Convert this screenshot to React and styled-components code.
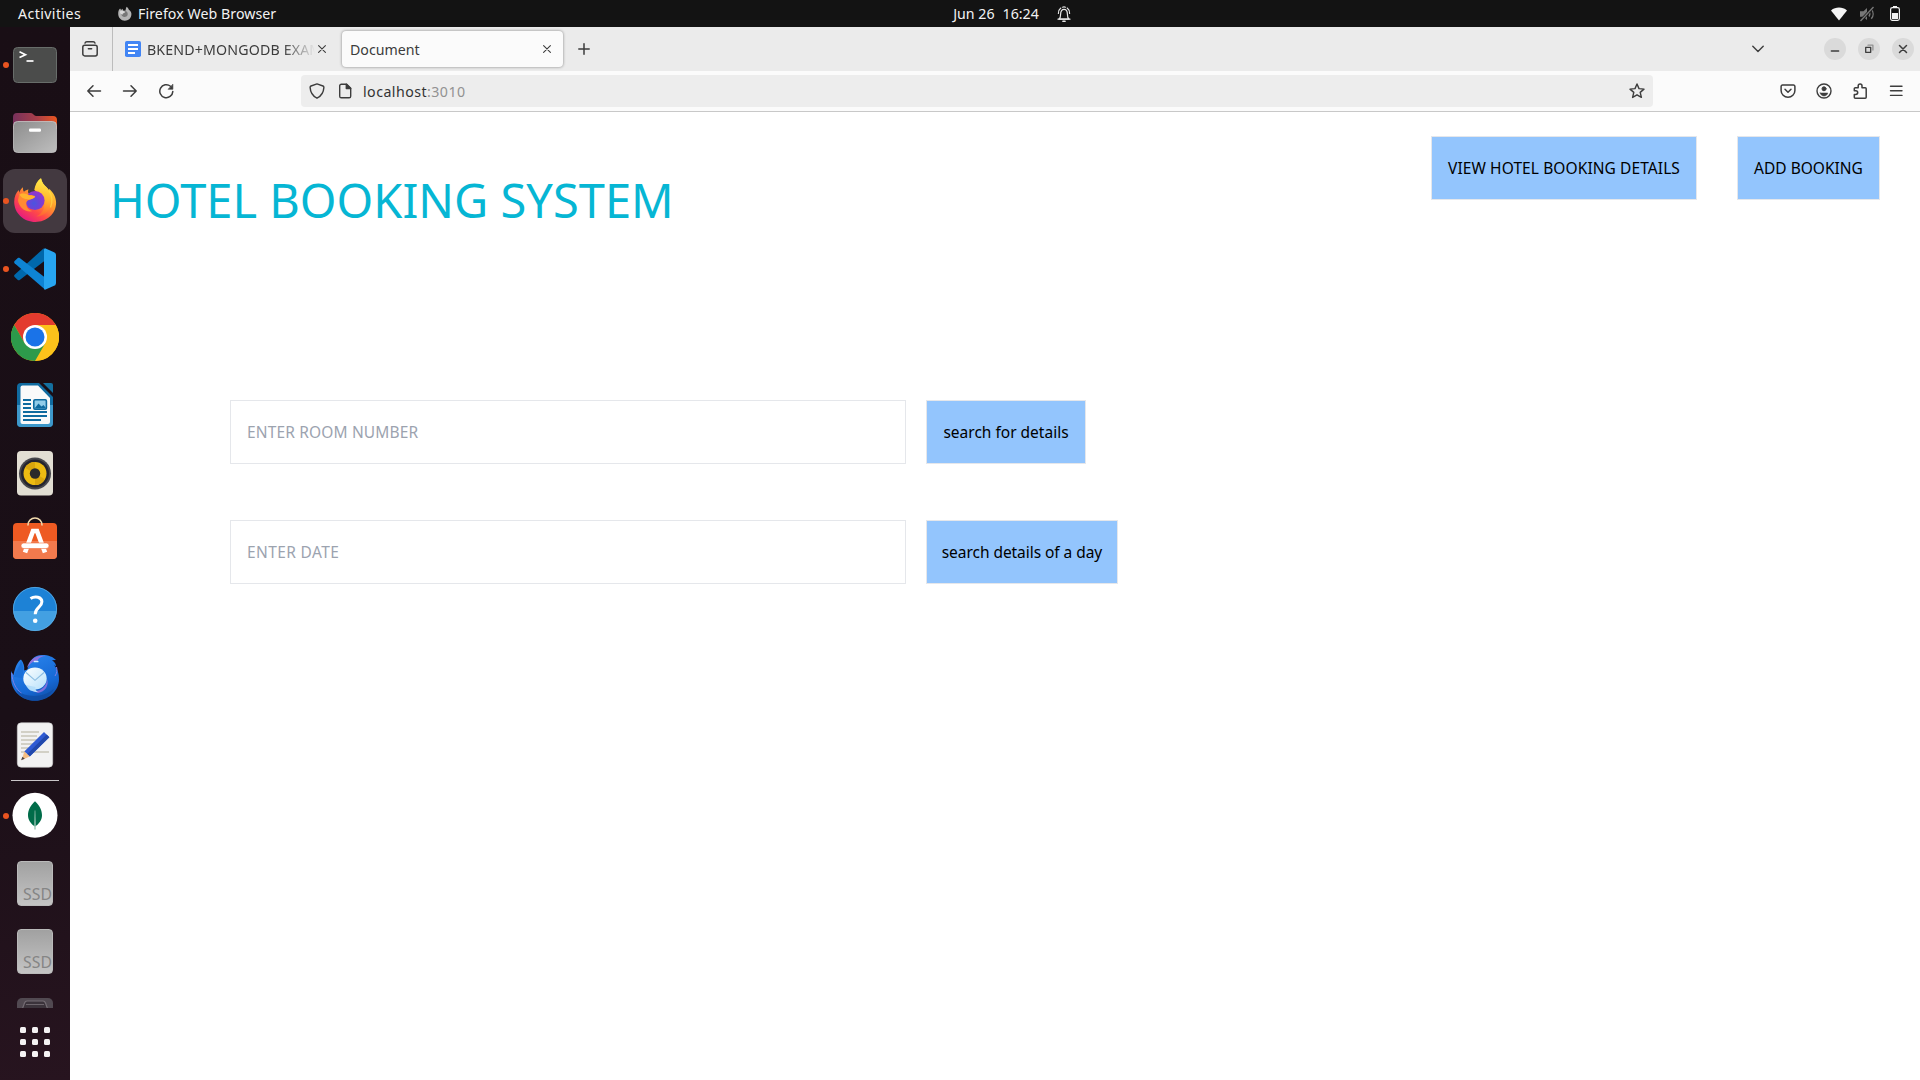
import React from 'react';
import styled, { createGlobalStyle } from 'styled-components';

const GlobalStyle = createGlobalStyle`
  *, *::before, *::after { box-sizing: border-box; }
  html, body { margin: 0; padding: 0; background: #fff; }
  body { font-family: 'Noto Sans', 'Open Sans', sans-serif; overflow: hidden; }
  svg { display: block; flex: none; }
`;

/* ---------- desktop shell ---------- */

const Desktop = styled.div`
  display: grid;
  grid-template: 27px 1053px / 70px 1fr;
  width: 1920px;
  height: 1080px;
`;

const TopBar = styled.header`
  grid-column: 1 / -1;
  display: grid;
  grid-template-columns: 1fr auto 1fr;
  align-items: center;
  background: #131313;
  color: #f2f2f2;
  font-size: 14.2px;
  line-height: 26px;
  white-space: pre;
`;

const BarGroup = styled.div`
  display: flex;
  align-items: center;
  justify-content: ${(p) => (p.$end ? 'flex-end' : 'flex-start')};
  padding: ${(p) => p.$pad || 0};
  gap: ${(p) => p.$gap || 0}px;
`;

const Label = styled.span`
  letter-spacing: ${(p) => p.$track || 0}px;
`;

const Dock = styled.nav`
  display: flex;
  flex-direction: column;
  align-items: center;
  padding-top: 4px;
  background: linear-gradient(172deg, #190e15 0%, #1a0f17 65%, #27141f 100%);
`;

const DockItem = styled.div`
  position: relative;
  display: flex;
  align-items: center;
  justify-content: center;
  flex: none;
  width: 70px;
  height: 68px;
`;

const Tile = styled.div`
  display: flex;
  align-items: center;
  justify-content: center;
  width: 64px;
  height: 64px;
  border-radius: 12px;
  background: ${(p) => (p.$active ? '#433940' : 'transparent')};
`;

const RunningDot = styled.i`
  position: absolute;
  left: 3px;
  top: 31px;
  width: 6px;
  height: 6px;
  border-radius: 50%;
  background: #e95420;
`;

const DockRule = styled.div`
  flex: none;
  width: 48px;
  height: 1px;
  margin: 1px 0;
  background: #c9c5c8;
`;

const DockClip = styled.div`
  height: 22px;
  overflow: hidden;
  flex: none;
`;

const AppsButton = styled.div`
  display: grid;
  grid-template-columns: repeat(3, 6px);
  gap: 6px;
  margin-top: 19px;
`;

const AppsDot = styled.i`
  width: 6px;
  height: 6px;
  border-radius: 1.5px;
  background: #f4f2f3;
`;

/* ---------- browser window ---------- */

const Browser = styled.section`
  display: flex;
  flex-direction: column;
  min-width: 0;
  background: #fff;
  color: #3c3c3c;
`;

const TabStrip = styled.div`
  display: flex;
  align-items: center;
  height: 44px;
  background: #ebebeb;
`;

const SidebarButton = styled.div`
  display: flex;
  align-items: center;
  height: 44px;
  width: 43px;
  padding-left: 12px;
  border-right: 1px solid #bcbcbc;
`;

const Tab = styled.div`
  display: flex;
  align-items: center;
  height: 36px;
  margin-left: ${(p) => (p.$active ? 16 : 12)}px;
  width: ${(p) => (p.$active ? 221 : 201)}px;
  padding: ${(p) => (p.$active ? '0 12px 0 8px' : '0')};
  border-radius: 4px;
  background: ${(p) => (p.$active ? '#fbfbfb' : 'transparent')};
  box-shadow: ${(p) => (p.$active ? '0 0 3px rgba(0,0,0,0.45)' : 'none')};
  font-size: 14.2px;
  line-height: 20px;
`;

const TabTitle = styled.span`
  flex: 1;
  min-width: 0;
  overflow: hidden;
  white-space: nowrap;
  margin-left: ${(p) => (p.$fade ? 6 : 0)}px;
  margin-right: ${(p) => (p.$fade ? 3 : 0)}px;
  padding-top: 1px;
  letter-spacing: ${(p) => p.$track || 0}px;
  mask-image: ${(p) => (p.$fade ? 'linear-gradient(to left, transparent, #000 32px)' : 'none')};
`;

const NewTab = styled.div`
  margin-left: 15px;
  flex: 1;
`;

const WindowControls = styled.div`
  display: flex;
  align-items: center;
  gap: 12px;
  padding-right: 6px;
`;

const RoundButton = styled.div`
  display: flex;
  align-items: center;
  justify-content: center;
  width: 22px;
  height: 22px;
  border-radius: 50%;
  background: #dadada;
`;

const ListTabs = styled.div`
  margin-right: 60px;
`;

const NavBar = styled.div`
  display: flex;
  align-items: center;
  height: 41px;
  padding: 0 16px;
  background: #fbfbfb;
  border-bottom: 1px solid #c8c8c8;
`;

const NavButtons = styled.div`
  display: flex;
  gap: 20px;
  width: 215px;
`;

const UrlBar = styled.div`
  display: flex;
  align-items: center;
  flex: none;
  width: 1352px;
  height: 32px;
  padding: 0 8px;
  gap: 12px;
  border-radius: 4px;
  background: #ededed;
`;

const Address = styled.span`
  flex: 1;
  margin-left: -2px;
  padding-top: 1px;
  font-size: 14.2px;
  line-height: 20px;
  letter-spacing: 0.45px;
  color: #333;
`;

const Port = styled.span`
  color: #929292;
`;

const Tools = styled.div`
  display: flex;
  justify-content: flex-end;
  gap: 20px;
  flex: 1;
`;

/* ---------- page ---------- */

const Page = styled.main`
  flex: 1;
  padding: 24px 40px 0;
`;

const Masthead = styled.div`
  display: flex;
  justify-content: space-between;
  align-items: flex-start;
  height: 264px;
`;

const Title = styled.h1`
  margin: 40px 0 0;
  font-size: 47px;
  line-height: 48px;
  font-weight: 400;
  letter-spacing: 0.01px;
  color: #06b6d4;
`;

const Actions = styled.div`
  display: flex;
  gap: 40px;
`;

const Button = styled.button`
  display: flex;
  align-items: center;
  justify-content: center;
  width: ${(p) => p.$w}px;
  height: 64px;
  padding: 0 0 1px;
  border: 1px solid #e5e7eb;
  background: #93c5fd;
  color: #000;
  font: 400 15.5px/24px 'Noto Sans', sans-serif;
  letter-spacing: ${(p) => p.$track || 0}px;
  white-space: nowrap;
`;

const SearchForm = styled.div`
  display: flex;
  flex-direction: column;
  gap: 56px;
  padding: 0 0 0 120px;
`;

const SearchRow = styled.div`
  display: flex;
  gap: 20px;
`;

const Field = styled.input`
  width: 676px;
  height: 64px;
  padding: 0 16px 1px;
  border: 1px solid #e5e7eb;
  background: #fff;
  font: 400 15.5px/24px 'Noto Sans', sans-serif;
  letter-spacing: ${(p) => p.$track}px;
  outline: none;
  &::placeholder { color: #9ca3af; opacity: 1; }
`;

/* ---------- toolbar icons ---------- */

const Line = ({ size = 16, w = 1.4, color = '#3d3d3d', children }) => (
  <svg width={size} height={size} viewBox={`0 0 ${size} ${size}`} fill="none" stroke={color}
    strokeWidth={w} strokeLinecap="round" strokeLinejoin="round">{children}</svg>
);

const CloseGlyph = () => <Line size={8} w={1.1}><path d="M.6.6l6.8 6.8M7.4.6L.6 7.4" /></Line>;

const GreyFirefox = () => (
  <svg width="15" height="15" viewBox="0 0 48 48">
    <path d="M4 20C5 13 8 9 10 8l3 5 5-4 1 5 8 1c1-6 2-10 4-13 4 3 6 6 7 10 6 4 9 9 8 16-1 12-10 19-21 19S2 38 4 20z" fill="#b4b4b4" />
    <path d="M16 20c4-5 14-5 17 1 4 8-2 14-8 14-7 0-12-5-12-11z" fill="#777" />
    <path d="M9 17l9-2 9 3-4 4c-4 1-6 3-5 6-6-1-9-6-9-11z" fill="#d8d8d8" />
  </svg>
);

const Bell = () => (
  <Line size={16} w={1.2} color="#e6e6e6">
    <path d="M3 13.2c1.4-1.2 1.6-3 1.6-5C4.600 5 6 3.300 8 3.300s3.400 1.700 3.400 4.900c0 2 .2 3.800 1.600 5z" />
    <path d="M2 13.2h12M2.400 7.500c0-2.500.8-4.200 2.400-5.400M13.600 7.500c0-2.500-.8-4.200-2.400-5.400M6.500 1.200c1-.3 2-.3 3 0" />
    <path d="M7 15.300h2" strokeWidth="1.600" />
  </Line>
);

const Wifi = () => (
  <svg width="16" height="14" viewBox="0 0 16 14"><path d="M0 3.400C4.700-.3 11.300-.3 16 3.400L8 13.500z" fill="#f4f4f4" /></svg>
);

const Muted = () => (
  <svg width="16" height="16" viewBox="0 0 16 16" fill="none" stroke="#777" strokeWidth="1.400">
    <path d="M1 5.200h3.500L8 2v12l-3.500-3.200H1z" fill="#777" stroke="none" />
    <path d="M10 5.500c1 1.500 1 3.500 0 5M12.300 3.200c2.400 2.800 2.400 6.800 0 9.600" />
    <path d="M1.500 15L14.500 1" stroke="#131313" strokeWidth="2.800" />
    <path d="M1.500 15L14.500 1" />
  </svg>
);

const Battery = () => (
  <svg width="10" height="15" viewBox="0 0 10 15">
    <path d="M3 0h4v2H3z" fill="#f4f4f4" />
    <rect x=".6" y="1.600" width="8.800" height="12.800" rx="1.800" fill="none" stroke="#f4f4f4" strokeWidth="1.200" />
    <rect x="2" y="7" width="6" height="6" fill="#f4f4f4" />
  </svg>
);

const Sidebar = () => (
  <Line w={1.500}>
    <path d="M3 2.100C3.300 1 4 .8 4.800.8h6.400c.8 0 1.500.2 1.800 1.300" />
    <rect x=".8" y="4.300" width="14.400" height="10.600" rx="1.900" /><path d="M6.400 7.800h3.200" />
  </Line>
);

const DocsIcon = () => (
  <svg width="16" height="16" viewBox="0 0 16 16"><rect width="16" height="16" rx="1.800" fill="#4285f4" />
    <path d="M3 4h10M3 8h10M3 12h7" stroke="#fff" strokeWidth="1.800" /></svg>
);

const Star = () => (
  <Line><path d="M8 1l2 4.600 5 .5-3.800 3.300 1.200 5L8 11.800l-4.400 2.600 1.200-5L1 6.100l5-.5z" /></Line>
);

/* ---------- dock icons ---------- */

const Art = ({ children }) => <svg width="48" height="48" viewBox="0 0 48 48">{children}</svg>;

const Terminal = () => (
  <Art>
    <rect x="2.500" y="6.500" width="43" height="35" rx="4" fill="#4b4c4b" stroke="#686d6a" />
    <path d="M8.500 10.800l6 2.900-6 2.900" fill="none" stroke="#fff" strokeWidth="1.700" />
    <path d="M15.500 20h7" stroke="#fff" strokeWidth="1.700" />
  </Art>
);

const Files = () => (
  <Art>
    <defs>
      <linearGradient id="fb" x1="0" x2="1"><stop offset="0" stopColor="#77315c" /><stop offset=".55" stopColor="#a93f49" /><stop offset="1" stopColor="#ea5620" /></linearGradient>
      <linearGradient id="ff" x1="0" y1="0" x2="1" y2="1"><stop offset="0" stopColor="#8d8d8d" /><stop offset="1" stopColor="#bebebe" /></linearGradient>
    </defs>
    <path d="M2 20V8a4 4 0 0 1 4-4h14c2 0 3 3 5 3h17a4 4 0 0 1 4 4v9z" fill="url(#fb)" />
    <rect x="2.500" y="12.500" width="43" height="31" rx="4" fill="url(#ff)" stroke="#c7c7c7" strokeWidth=".8" />
    <rect x="18" y="19.500" width="12" height="3.300" rx="1.200" fill="#fff" />
  </Art>
);

const Firefox = () => (
  <Art>
    <defs>
      <linearGradient id="fx1" x1=".85" y1=".1" x2=".25" y2="1"><stop offset="0" stopColor="#ffe23c" /><stop offset=".4" stopColor="#ff9a2b" /><stop offset=".68" stopColor="#ff4a47" /><stop offset="1" stopColor="#e31587" /></linearGradient>
      <linearGradient id="fx2" x1=".6" y1="0" x2=".5" y2="1"><stop offset="0" stopColor="#fff04c" /><stop offset=".55" stopColor="#ffb52b" /><stop offset="1" stopColor="#ff5f35" /></linearGradient>
      <radialGradient id="fx3" cx=".45" cy=".65" r=".65"><stop offset="0" stopColor="#4a55e0" /><stop offset=".55" stopColor="#7440d5" /><stop offset="1" stopColor="#9a35c8" /></radialGradient>
    </defs>
    <path d="M3.200 25c0-5 1.800-9.500 4.600-12l.4 2.800c.9-2.700 2.200-4.600 3.800-5.600-.2 2 .2 3.500 1 4.600 1.500-1.300 3-2 4.500-2.200-.7 1.600-.6 3 .2 4l10 3C23.200 12 25 4.500 30 1.200c.8 4.300 2.800 6.300 5.800 9.300 1.200 1.200 1.900 2.400 2.200 3.600l.2-2.300c4 3.500 6.900 8.500 6.900 14C45.100 37 35.500 45 24.300 45S3.200 36.300 3.200 25z" fill="url(#fx1)" />
    <path d="M23.300 13C24 8 26 4 30 1.200c.8 4.300 2.800 6.300 5.800 9.300 5 5.100 5.500 11.500 4 17.500-2 7-8 11.500-14.500 11.500 6-3 8.700-8 8-14-.6-5-4.500-8.500-10-12.500z" fill="url(#fx2)" />
    <circle cx="24" cy="23.500" r="9.600" fill="url(#fx3)" />
    <path d="M8.500 17c3-2.200 7-1.500 9.500 1 2.500-.3 4.700.3 6.200 1.300-.9 2-3.300 3-5.700 3.400-2 .4-3.100 1.500-3.200 3.500-.2 4 2.200 7 6.400 7.800C14.500 36 7.500 30 7 23z" fill="#ff8a32" />
    <path d="M8.500 17.500c3-1.700 7-1 9.500 1 2.500-.3 4.700.3 6.200 1.300-.9 1.500-3.300 2.500-5.700 2.600-4 .2-8-1-10-4.900z" fill="#ffb32e" />
    <path d="M38 13.500c3 5 4 11 1.500 17" fill="none" stroke="#ffe34a" strokeWidth="1.300" opacity=".6" />
  </Art>
);

const Code = () => (
  <Art>
    <path d="M32.800 3.200L3.600 29.700c-.6.600-.6 1.600 0 2.200l3.200 3c.6.500 1.300.5 1.900.1L34 15.600z" fill="#0068ac" />
    <path d="M3.600 18.300c-.6-.6-.6-1.600 0-2.200l3.200-3c.6-.5 1.300-.5 1.900-.1L34 32.400v12z" fill="#0e84d4" />
    <path d="M34 3.200L42.500 7A3 3 0 0 1 45 9.800v28.400a3 3 0 0 1-2.500 2.800L34 44.800a1.800 1.800 0 0 1-1-2V5.200a1.800 1.800 0 0 1 1-2z" fill="#27a5f0" />
  </Art>
);

const Chrome = () => (
  <Art>
    <circle cx="24" cy="24" r="24" fill="#fbbc04" />
    <path d="M24 24V12h20.800A24 24 0 0 0 3.200 12l10.400 18z" fill="#e33b2e" />
    <path d="M24 12h20.800A24 24 0 0 1 24 48l10.400-18z" fill="#fcc21b" />
    <path d="M3.200 12A24 24 0 0 0 24 48l10.400-18c-6 7-16 6-20.800 0z" fill="#2d9a4b" />
    <circle cx="24" cy="24" r="12" fill="#fff" /><circle cx="24" cy="24" r="9.500" fill="#1a73e8" />
  </Art>
);

const Writer = () => (
  <Art>
    <path d="M10 2h18l14 14v26a4 4 0 0 1-4 4H10a4 4 0 0 1-4-4V6a4 4 0 0 1 4-4z" fill="#106ba0" />
    <path d="M6 24h36v18a4 4 0 0 1-4 4H10a4 4 0 0 1-4-4z" fill="#3d98ca" />
    <path d="M32 2h8a2 2 0 0 1 2 2v8z" fill="#14709f" />
    <path d="M11.500 4.500H27L39 17v24a2 2 0 0 1-2 2H11.500a2 2 0 0 1-2-2V6.500a2 2 0 0 1 2-2z" fill="#fafafa" />
    <path d="M12 19h8M12 23h8M12 27h8M12 31h24M12 35h24M12 39h18" stroke="#0f6a9f" strokeWidth="2" />
    <rect x="22.800" y="18.800" width="12.600" height="9.400" rx="1.200" fill="#92cce9" stroke="#0f6a9f" strokeWidth="1.600" />
    <path d="M23.500 27.500l4-5 3 3 2-1.500 2.800 3.500z" fill="#0f6a9f" />
  </Art>
);

const Rhythmbox = () => (
  <Art>
    <rect x="6" y="2" width="36" height="44.500" rx="4" fill="#e2ded3" />
    <circle cx="24" cy="24.500" r="16" fill="#47474c" /><circle cx="24" cy="24.500" r="14" fill="#24242e" />
    <circle cx="24" cy="24.500" r="11.500" fill="#ecbb12" />
    <path d="M24 24.500L14 18.800A11.500 11.500 0 0 1 24 13zM24 24.500l10 5.700A11.500 11.500 0 0 1 24 36z" fill="#d9a60d" />
    <circle cx="24" cy="24.500" r="5.200" fill="#2a2a2a" />
  </Art>
);

const Software = () => (
  <Art>
    <rect x="2" y="6" width="44" height="36" rx="4" fill="#ee5a22" /><path d="M2 24h44v14a4 4 0 0 1-4 4H6a4 4 0 0 1-4-4z" fill="#f27a4d" />
    <path d="M17 8.500V8a7 7 0 0 1 14 0v.5" fill="none" stroke="#f3dcae" strokeWidth="1.600" />
    <path d="M14 35.500l8-21.500h4l8 21.500" fill="none" stroke="#fff" strokeWidth="4.600" />
    <rect x="10" y="26" width="28" height="5.500" rx="2.700" fill="#fff" stroke="#f06b3a" strokeWidth=".6" />
  </Art>
);

const Help = () => (
  <Art>
    <defs><clipPath id="hc"><circle cx="24" cy="24" r="22" /></clipPath></defs>
    <g clipPath="url(#hc)"><path d="M0 0h48v26H0z" fill="#1d82d6" /><path d="M0 26h48v22H0z" fill="#43a0e2" /></g>
    <circle cx="24" cy="24" r="21.600" fill="none" stroke="#59ade7" strokeWidth=".8" />
    <path d="M19.500 13.600c4.500-3 11.400-1.800 11.400 3.200 0 5.500-6.700 5.200-6.700 12.500" fill="none" stroke="#fff" strokeWidth="3" />
    <circle cx="24.200" cy="35.700" r="2.300" fill="#fff" />
  </Art>
);

const Thunderbird = () => (
  <Art>
    <defs>
      <linearGradient id="tb" x1=".2" y1="0" x2=".7" y2="1"><stop offset="0" stopColor="#2a86ee" /><stop offset=".7" stopColor="#1668d4" /><stop offset="1" stopColor="#0f4fa8" /></linearGradient>
      <linearGradient id="te" x1="0" y1="0" x2="1" y2="1"><stop offset="0" stopColor="#fff" /><stop offset="1" stopColor="#b5e0fb" /></linearGradient>
    </defs>
    <path d="M0 18c1 2 1.500 3 2.500 4C4 15 6 9 10 6.500c2.600 3 3.700 7 3.200 11l3.300-1C18 8 23 2 31 2c7 0 11 2 14 5l-4 .3c3 2 4 4 4 6l-2-1c4 4 5 9 5 14 0 12-11 21.500-24 21.500S0 38 0 25z" fill="url(#tb)" />
    <path d="M3 24c2-7 5-9 7-16 3 6 2.500 11 1 17z" fill="#1a6fd8" />
    <path d="M16 15C18 7 25 1.200 35 3c-4 .2-7 1.500-8.500 4.500-4 .5-7 2.500-10.500 7.500z" fill="#8d73df" />
    <path d="M.8 20c.4 9 4 16 10 20.500M45.500 14c.8 3 .6 6-1.500 9" fill="none" stroke="#7f7fe4" strokeWidth="1" />
    <path d="M22 38c8 1 14-5 14-12 2.500 6-2 13-9 14z" fill="#7f70dd" />
    <path d="M5 37c10 8 27 8 38-1-4 7-11 12-19 12-8 0-15-4-19-11z" fill="#0f4a9f" opacity=".7" />
    <ellipse cx="24" cy="25.500" rx="11.700" ry="11" fill="url(#te)" />
    <path d="M15 32c2 5 6 7 12 7-2-1-3-3-2.500-5z" fill="#b5defa" />
    <path d="M15 19.500l9 7.800 9-7.800" fill="none" stroke="#8bbde2" strokeWidth="1.100" />
    <path d="M23.500 8.500h3.200" stroke="#d9ecff" strokeWidth="1.700" strokeLinecap="round" />
  </Art>
);

const TextEditor = () => (
  <Art>
    <rect x="6.300" y="1.800" width="35.400" height="44.400" rx="4" fill="#f2f2f2" stroke="#d0d0d0" strokeWidth=".6" />
    <path d="M10 11h18M10 15h16M10 19h16M10 23h13M10 27h10M10 31h28" stroke="#c8c5b8" strokeWidth="1.700" />
    <path d="M33 11l5.300 5.200-19.500 19.300-5.500-5z" fill="#2f5bd3" /><path d="M35.700 13.500l-19.600 19.700 2.600 2.400 19.600-19.400z" fill="#2148ac" />
    <path d="M13.300 30.500l5.500 5-8 3.500z" fill="#f3bd84" /><path d="M11.500 35.800l2.300 2-3.800 1.400z" fill="#4c4546" />
  </Art>
);

const Mongo = () => (
  <Art>
    <circle cx="24" cy="23.300" r="22.500" fill="#fff" />
    <path d="M24 9.300c5 4.500 7 9.500 7 14 0 5-3 8.500-7 11.500-4-3-7-6.500-7-11.500 0-4.500 2-9.500 7-14z" fill="#006c49" />
    <path d="M23.200 37.500l.5-19h.6l.5 19z" fill="#a9cdbf" />
  </Art>
);

const SsdIcon = styled.div`
  display: flex;
  align-items: flex-end;
  justify-content: flex-end;
  width: 36px;
  height: 45px;
  margin-bottom: 1px;
  padding: 0 0 2px;
  border: 1px solid #bababa;
  border-radius: 4px;
  background: linear-gradient(#a1a1a1, #c4c4c4);
  color: #858585;
  font-size: 15.800px;
  line-height: 17px;
`;

const Drive = () => (
  <Art>
    <rect x="6" y="2" width="36" height="44" rx="5" fill="#514951" />
    <path d="M11 14l2.500-7c.5-1.500 1-2 2.500-2h16c1.500 0 2 .5 2.500 2l2.500 7z" fill="#3b333b" stroke="#756d74" strokeWidth="1.200" />
    <path d="M15 8.500h18" stroke="#6d656c" />
  </Art>
);

const APPS = [
  { id: 'terminal', icon: <Terminal />, running: true },
  { id: 'files', icon: <Files /> },
  { id: 'firefox', icon: <Firefox />, running: true, active: true },
  { id: 'code', icon: <Code />, running: true },
  { id: 'chrome', icon: <Chrome /> },
  { id: 'writer', icon: <Writer /> },
  { id: 'rhythmbox', icon: <Rhythmbox /> },
  { id: 'software', icon: <Software /> },
  { id: 'help', icon: <Help /> },
  { id: 'thunderbird', icon: <Thunderbird /> },
  { id: 'editor', icon: <TextEditor /> },
];

const DockEntry = ({ icon, running, active }) => (
  <DockItem>
    {running && <RunningDot />}
    <Tile $active={active}>{icon}</Tile>
  </DockItem>
);

export default function App() {
  return (
    <Desktop>
      <GlobalStyle />
      <TopBar>
        <BarGroup $pad="0 0 0 18px">
          <Label $track={0.4}>Activities</Label>
          <BarGroup $pad="0 0 0 36px" $gap={6}>
            <GreyFirefox />
            <Label $track={0.05}>Firefox Web Browser</Label>
          </BarGroup>
        </BarGroup>
        <BarGroup $gap={8} $pad="0 0 0 105px">
          <Label>Jun 26</Label>
          <Label>16:24</Label>
          <BarGroup $pad="0 0 0 9px"><Bell /></BarGroup>
        </BarGroup>
        <BarGroup $end $gap={12} $pad="0 20px 0 0">
          <Wifi />
          <Muted />
          <BarGroup $pad="0 0 0 3px"><Battery /></BarGroup>
        </BarGroup>
      </TopBar>

      <Dock>
        {APPS.map((a) => <DockEntry key={a.id} {...a} />)}
        <DockRule />
        <DockEntry icon={<Mongo />} running />
        <DockItem><SsdIcon>SSD</SsdIcon></DockItem>
        <DockItem><SsdIcon>SSD</SsdIcon></DockItem>
        <DockClip><DockEntry icon={<Drive />} /></DockClip>
        <AppsButton>
          {Array.from({ length: 9 }, (_, i) => <AppsDot key={i} />)}
        </AppsButton>
      </Dock>

      <Browser>
        <TabStrip>
          <SidebarButton><Sidebar /></SidebarButton>
          <Tab>
            <DocsIcon />
            <TabTitle $fade $track={0.15}>BKEND+MONGODB EXAM</TabTitle>
            <CloseGlyph />
          </Tab>
          <Tab $active>
            <TabTitle>Document</TabTitle>
            <CloseGlyph />
          </Tab>
          <NewTab><Line size={12} w={1.500}><path d="M6 .8v10.400M.8 6h10.400" /></Line></NewTab>
          <ListTabs><Line size={12}><path d="M.8 3.200L6 8.400l5.200-5.200" /></Line></ListTabs>
          <WindowControls>
            <RoundButton><Line size={10} w={1.300}><path d="M1.300 7h7.400" /></Line></RoundButton>
            <RoundButton>
              <Line size={10} w={1.300}><rect x="1.700" y="3.300" width="5" height="5" /><path d="M4 1.200h4.900v4.900" stroke="#929292" /></Line>
            </RoundButton>
            <RoundButton><Line size={10} w={1.500}><path d="M1.500 1.500l7 7M8.500 1.500l-7 7" /></Line></RoundButton>
          </WindowControls>
        </TabStrip>

        <NavBar>
          <NavButtons>
            <Line w={1.500}><path d="M14.500 8H1.800M7 2.800L1.800 8 7 13.200" /></Line>
            <Line w={1.500}><path d="M1.500 8h12.700M9 2.800L14.200 8 9 13.200" /></Line>
            <Line w={1.500}><path d="M14.800 8.600a6.500 6.500 0 1 1-2.300-5.400" /><path d="M14.900 1.500v4.800h-4.500z" fill="#3d3d3d" strokeWidth=".6" /></Line>
          </NavButtons>
          <UrlBar>
            <Line><path d="M8 .9l6 2.100c.7.300.9.800.9 1.400C14.600 9.500 12.500 13 8 15.200 3.500 13 1.400 9.500 1.100 4.400c0-.6.2-1.100.9-1.400z" /></Line>
            <Line><path d="M4.300 1.200h5.400l4 4v8a1.600 1.600 0 0 1-1.600 1.600H4.300a1.600 1.600 0 0 1-1.600-1.600V2.800a1.600 1.600 0 0 1 1.600-1.600z" /><path d="M9.300 1.200l4.400 4.400H9.300z" fill="#3d3d3d" /></Line>
            <Address>localhost<Port>:3010</Port></Address>
            <Star />
          </UrlBar>
          <Tools>
            <Line w={1.500}><path d="M2.500 2h11a1.400 1.400 0 0 1 1.400 1.400v4a6.900 6.900 0 0 1-13.800 0v-4A1.400 1.400 0 0 1 2.500 2z" /><path d="M5 6.200l3 3 3-3" /></Line>
            <Line w={1.400}><circle cx="8" cy="8" r="7" /><circle cx="8" cy="5.800" r="2" fill="#3d3d3d" strokeWidth="1" /><path d="M4.200 10h7.600c-.6 2-2 3-3.800 3s-3.200-1-3.800-3z" fill="#3d3d3d" strokeWidth=".5" /></Line>
            <Line w={1.500}><path d="M6.200 4.800V2.800a1.900 1.900 0 0 1 3.800 0v2h3.200a1 1 0 0 1 1 1v8.400a1 1 0 0 1-1 1H3.300a1 1 0 0 1-1-1v-2.700h1.500a1.900 1.900 0 0 0 0-3.800H2.300V5.800a1 1 0 0 1 1-1z" /></Line>
            <Line w={1.400}><path d="M2.500 3.300h11.500M2.500 7.800h11.500M2.500 12.400h11.500" /></Line>
          </Tools>
        </NavBar>

        <Page>
          <Masthead>
            <Title>HOTEL BOOKING SYSTEM</Title>
            <Actions>
              <Button $w={266} $track={0.09}>VIEW HOTEL BOOKING DETAILS</Button>
              <Button $w={143}>ADD BOOKING</Button>
            </Actions>
          </Masthead>
          <SearchForm>
            <SearchRow>
              <Field placeholder="ENTER ROOM NUMBER" $track={0.15} />
              <Button $w={160}>search for details</Button>
            </SearchRow>
            <SearchRow>
              <Field placeholder="ENTER DATE" $track={0.38} />
              <Button $w={192} $track={-0.05}>search details of a day</Button>
            </SearchRow>
          </SearchForm>
        </Page>
      </Browser>
    </Desktop>
  );
}
